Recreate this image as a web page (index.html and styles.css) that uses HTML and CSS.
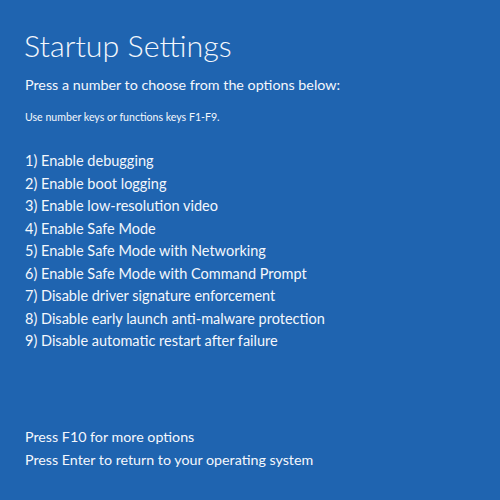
FILE: index.html
```html
<!DOCTYPE html>
<html lang="en">
<head>
    <meta charset="UTF-8">
    <meta name="viewport" content="width=device-width, initial-scale=1.0">
    <title>Startup Settings</title>
    <link rel="stylesheet" href="styles.css">
</head>
<body>
    <div class="screen">
        <h1>Startup Settings</h1>
        <p class="lead">Press a number to choose from the options below:</p>
        <p class="hint">Use number keys or functions keys F1-F9.</p>

        <ul class="options">
            <li>1) Enable debugging</li>
            <li>2) Enable boot logging</li>
            <li>3) Enable low-resolution video</li>
            <li>4) Enable Safe Mode</li>
            <li>5) Enable Safe Mode with Networking</li>
            <li>6) Enable Safe Mode with Command Prompt</li>
            <li>7) Disable driver signature enforcement</li>
            <li>8) Disable early launch anti-malware protection</li>
            <li>9) Disable automatic restart after failure</li>
        </ul>

        <div class="footer">
            <p>Press F10 for more options</p>
            <p>Press Enter to return to your operating system</p>
        </div>
    </div>
</body>
</html>
```

FILE: styles.css
```css
html, body {
    margin: 0;
    padding: 0;
    height: 100%;
}

body {
    background-color: #1f64b0;
    color: #f4f7fc;
    font-family: Lato, "Open Sans", sans-serif;
}

.screen {
    height: 100%;
    box-sizing: border-box;
    padding: 26px 0 0 24px;
    display: flex;
    flex-direction: column;
}

h1 {
    margin: 0;
    font-size: 30.4px;
    font-weight: 300;
    line-height: 38px;
}

.lead {
    margin: 10px 0 0 1px;
    font-size: 14.3px;
    line-height: 22px;
}

.hint {
    margin: 13px 0 0 1px;
    font-size: 10.6px;
    line-height: 16px;
}

.options {
    list-style: none;
    margin: 25px 0 0 1px;
    padding: 0;
    font-size: 14.5px;
    line-height: 22.5px;
}

.footer {
    margin: auto 0 29px 1px;
    font-size: 14.25px;
    line-height: 23px;
}

.footer p {
    margin: 0;
}
```
